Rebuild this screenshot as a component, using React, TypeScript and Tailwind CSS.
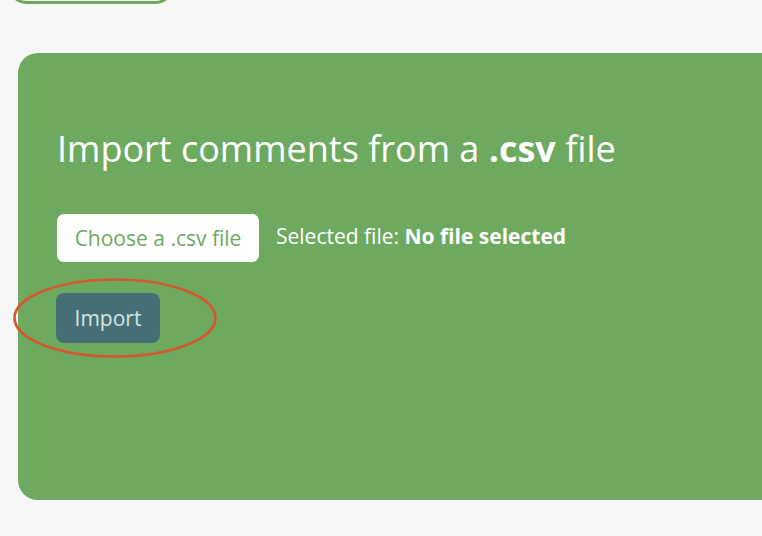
import React from "react";

export default function App() {
  return (
    <div className="w-[762px] h-[536px] overflow-hidden bg-[#f7f7f7] relative" style={{ fontFamily: '"Open Sans", sans-serif' }}>
      <div className="ml-[7px] mt-[-40px] w-[168px] h-[44px] rounded-[20px] border-[3px] border-[#6daa5f] bg-[#f7f7f7]" />
      <div className="ml-[18px] mt-[49px] w-[780px] h-[447px] rounded-[20px] bg-[#6daa5f] pl-[39px] pt-[72px]">
        <h1 className="text-[36px] leading-[48px] text-white font-normal">
          Import comments from a <span className="font-bold">.csv</span> file
        </h1>
        <div className="mt-[41px] flex items-center gap-[17px]">
          <button className="w-[202px] h-[48px] rounded-[7px] bg-white text-[#6daa5f] text-[21px] leading-none">
            Choose a .csv file
          </button>
          <div className="text-white text-[21px] leading-none pb-[4px]">
            Selected file: <span className="font-bold">No file selected</span>
          </div>
        </div>
        <div className="mt-[31px] relative w-[104px] h-[50px]">
          <button className="w-[104px] h-[50px] rounded-[8px] bg-[#456f74] text-[#d4e6e2] text-[21px] leading-none ml-[-1px]">
            Import
          </button>
          <svg className="absolute left-[-45px] top-[-16px]" width="206" height="82" viewBox="0 0 206 82">
            <ellipse cx="103" cy="41" rx="100.5" ry="38.5" fill="none" stroke="#d4572e" strokeWidth="2.6" />
          </svg>
        </div>
      </div>
    </div>
  );
}
